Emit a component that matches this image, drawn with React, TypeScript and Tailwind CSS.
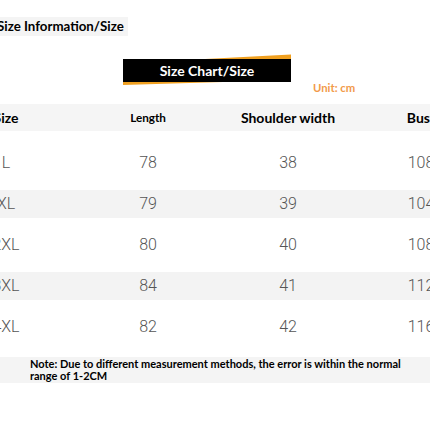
const rows = [
  { size: "L", length: "78", shoulder: "38", bust: "108", shaded: false },
  { size: "XL", length: "79", shoulder: "39", bust: "104", shaded: true },
  { size: "2XL", length: "80", shoulder: "40", bust: "108", shaded: false },
  { size: "3XL", length: "84", shoulder: "41", bust: "112", shaded: true },
  { size: "4XL", length: "82", shoulder: "42", bust: "116", shaded: false },
]

const cols = "grid grid-cols-[140px_144px_136px_130px] items-center"

export default function App() {
  return (
    <div className="relative h-[430px] w-[430px] overflow-hidden bg-white font-['Lato','Liberation_Sans',sans-serif] text-black">
      <div className="mt-[17px] flex h-[19px] w-[128px] items-center bg-[#f4f4f4]">
        <span className="-ml-[3px] whitespace-nowrap text-[13.3px] font-bold leading-none">Size Information/Size</span>
      </div>

      <div className="relative mt-[18px] ml-[123px] w-[168px] pt-[5px]">
        <svg className="absolute left-0 top-0" width="168" height="31" viewBox="0 0 168 31">
          <polygon points="82,5 168,0.5 168,5" fill="#f0a020" />
          <polygon points="0,28 100,28 0,31" fill="#f0a020" />
        </svg>
        <div className="relative flex h-[23px] items-center justify-center bg-black">
          <span className="text-[14px] font-bold leading-none text-white">Size Chart/Size</span>
        </div>
      </div>

      <div className="ml-[313px] text-[11.3px] font-bold leading-[12px] text-[#f29a4a]">Unit: cm</div>

      <div className="-ml-[64px] mt-[10px] w-[550px]">
        <div className={`${cols} h-[27px] whitespace-nowrap bg-[#f5f5f5] text-center font-bold`}>
          <span className="text-[14px]">Size</span>
          <span className="text-[11.7px]">Length</span>
          <span className="text-[14px]">Shoulder width</span>
          <span className="text-[14px]">Bust</span>
        </div>
        <div className="mt-[18px] flex flex-col gap-[13px]">
          {rows.map((r) => (
            <div
              key={r.size}
              className={`${cols} h-[28px] text-center font-['Roboto',sans-serif] text-[16px] font-light text-[#555] ${
                r.shaded ? "bg-[#f3f3f3]" : ""
              }`}
            >
              <span>{r.size}</span>
              <span>{r.length}</span>
              <span>{r.shoulder}</span>
              <span>{r.bust}</span>
            </div>
          ))}
        </div>
      </div>

      <div className="mt-[16px] h-[26px] bg-[#f4f4f4] pl-[30px] pt-[1px] text-[11px] font-bold leading-[11.5px]">
        <span className="whitespace-nowrap">Note: Due to different measurement methods, the error is within the normal</span>
        <br />
        range of 1-2CM
      </div>
    </div>
  )
}
